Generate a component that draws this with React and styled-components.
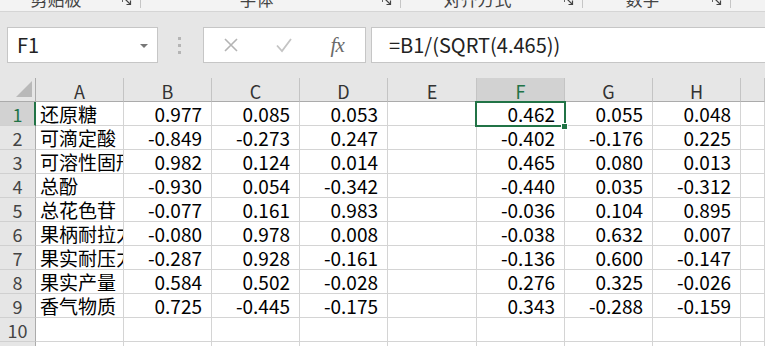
import styled, { createGlobalStyle } from "styled-components";

const GREEN = "#217346";
const FONT = `"Noto Sans CJK SC", "Noto Sans", sans-serif`;

const GlobalStyle = createGlobalStyle`
	html, body {
		margin: 0;
		padding: 0;
		background: #ffffff;
		overflow: hidden;
	}
	body {
		font-family: ${FONT};
	}
`;

const Page = styled.div`
	width: 765px;
	height: 346px;
	overflow: hidden;
	background: #ffffff;
`;

const Ribbon = styled.div`
	display: flex;
	height: 11px;
	background: #f3f3f3;
	border-bottom: 1px solid #d5d5d5;
	overflow: hidden;
`;

const Group = styled.div`
	display: flex;
	align-items: flex-start;
	width: ${(p) => p.width}px;
	flex-shrink: 0;
`;

const GroupLabel = styled.div`
	flex: 1;
	text-align: center;
	padding-right: 10px;
	font-size: 17px;
	line-height: 17px;
	margin-top: -10px;
	color: #444444;
	white-space: nowrap;
`;

const Launcher = styled.svg`
	width: 10px;
	height: 10px;
	margin-top: -4px;
	margin-right: 8px;
	flex-shrink: 0;
`;

const GroupDivider = styled.div`
	width: 1px;
	height: 8px;
	background: #c6c6c6;
	flex-shrink: 0;
`;

const FormulaBar = styled.div`
	display: flex;
	align-items: center;
	height: 66px;
	padding-left: 7px;
	background: #e6e6e6;
	box-sizing: border-box;
`;

const NameBox = styled.div`
	display: flex;
	align-items: center;
	justify-content: space-between;
	width: 151px;
	height: 36px;
	box-sizing: border-box;
	background: #ffffff;
	border: 1px solid #c6c6c6;
	padding: 0 9px;
	font-size: 20px;
	line-height: 24px;
	color: #222222;
`;

const Caret = styled.span`
	width: 0;
	height: 0;
	border-left: 4px solid transparent;
	border-right: 4px solid transparent;
	border-top: 4px solid #777777;
	margin-top: 2px;
`;

const Grip = styled.div`
	display: flex;
	flex-direction: column;
	gap: 4px;
	margin: 0 22px 0 20px;
	span {
		width: 3px;
		height: 3px;
		background: #b5b5b5;
	}
`;

const ActionBox = styled.div`
	display: grid;
	grid-template-columns: repeat(3, 1fr);
	align-items: center;
	justify-items: center;
	width: 163px;
	height: 36px;
	box-sizing: border-box;
	background: #ffffff;
	border: 1px solid #c6c6c6;
`;

const Fx = styled.span`
	font-family: "Liberation Serif", serif;
	font-style: italic;
	font-size: 21px;
	line-height: 24px;
	color: #6a6a6a;
	letter-spacing: -1px;
	padding-right: 2px;
`;

const FormulaInput = styled.div`
	flex: 1;
	height: 36px;
	margin-left: 5px;
	box-sizing: border-box;
	background: #ffffff;
	border: 1px solid #c6c6c6;
	border-right: none;
	display: flex;
	align-items: center;
	padding-left: 17px;
	font-size: 20px;
	line-height: 24px;
	color: #222222;
	white-space: nowrap;
`;

const Sheet = styled.div`
	position: relative;
	display: grid;
	grid-template-columns: 36px 88px 88px 88px 88px 89px 88px 88px 88px 1fr;
	grid-auto-rows: 24px;
	font-size: 19px;
`;

const Corner = styled.div`
	background: #e6e6e6;
	border-right: 1px solid #ababab;
	border-bottom: 1px solid #ababab;
	box-sizing: border-box;
	display: flex;
	align-items: flex-end;
	justify-content: flex-end;
	padding: 0 3px 4px 0;
	svg {
		display: block;
	}
`;

const ColHead = styled.div`
	box-sizing: border-box;
	background: ${(p) => (p.active ? "#d2d2d2" : "#e6e6e6")};
	color: ${(p) => (p.active ? GREEN : "#333333")};
	border-right: 1px solid #c4c4c4;
	border-bottom: 1px solid #ababab;
	display: flex;
	align-items: center;
	justify-content: center;
	font-size: 18px;
	line-height: 20px;
	padding-top: 2px;
	overflow: hidden;
`;

const RowHead = styled.div`
	box-sizing: border-box;
	background: ${(p) => (p.active ? "#d2d2d2" : "#e6e6e6")};
	color: ${(p) => (p.active ? GREEN : "#444444")};
	border-right: ${(p) => (p.active ? `2px solid ${GREEN}` : "1px solid #ababab")};
	border-bottom: 1px solid #d0d0d0;
	display: flex;
	align-items: center;
	justify-content: center;
	font-size: 18px;
	line-height: 20px;
	padding-left: ${(p) => (p.active ? "1px" : "0")};
	overflow: hidden;
`;

const Cell = styled.div`
	box-sizing: border-box;
	border-right: 1px solid #d4d4d4;
	border-bottom: 1px solid #d4d4d4;
	display: flex;
	align-items: center;
	justify-content: ${(p) => (p.text ? "flex-start" : "flex-end")};
	padding: ${(p) => (p.text ? "0 0 0 4px" : "0 9px 0 0")};
	overflow: hidden;
	white-space: nowrap;
	color: #000000;
	line-height: 22px;
`;

const Selection = styled.div`
	position: absolute;
	left: 475px;
	top: 23px;
	width: 91px;
	height: 26px;
	box-sizing: border-box;
	border: 2px solid ${GREEN};
	pointer-events: none;
`;

const FillHandle = styled.div`
	position: absolute;
	left: 561px;
	top: 45px;
	width: 7px;
	height: 7px;
	box-sizing: border-box;
	background: ${GREEN};
	border: 1px solid #ffffff;
`;

const groups = [
	{ label: "剪贴板", width: 141 },
	{ label: "字体", width: 260 },
	{ label: "对齐方式", width: 182 },
	{ label: "数字", width: 148 },
];

const columns = ["A", "B", "C", "D", "E", "F", "G", "H", ""];

const data = [
	["还原糖", "0.977", "0.085", "0.053", "", "0.462", "0.055", "0.048"],
	["可滴定酸", "-0.849", "-0.273", "0.247", "", "-0.402", "-0.176", "0.225"],
	["可溶性固形物", "0.982", "0.124", "0.014", "", "0.465", "0.080", "0.013"],
	["总酚", "-0.930", "0.054", "-0.342", "", "-0.440", "0.035", "-0.312"],
	["总花色苷", "-0.077", "0.161", "0.983", "", "-0.036", "0.104", "0.895"],
	["果柄耐拉力", "-0.080", "0.978", "0.008", "", "-0.038", "0.632", "0.007"],
	["果实耐压力", "-0.287", "0.928", "-0.161", "", "-0.136", "0.600", "-0.147"],
	["果实产量", "0.584", "0.502", "-0.028", "", "0.276", "0.325", "-0.026"],
	["香气物质", "0.725", "-0.445", "-0.175", "", "0.343", "-0.288", "-0.159"],
	["", "", "", "", "", "", "", ""],
	["", "", "", "", "", "", "", ""],
];

const LauncherIcon = () => (
	<Launcher viewBox="0 0 10 10">
		<path d="M0.5 6V0.5H6" fill="none" stroke="#666" strokeWidth="1" />
		<path d="M3 3L8.5 8.5M8.5 4.5V8.5H4.5" fill="none" stroke="#444" strokeWidth="1.2" />
	</Launcher>
);

const Row = ({ index, row }) => (
	<>
		<RowHead active={index === 0}>{index + 1}</RowHead>
		{row.map((v, i) => (
			<Cell key={i} text={i === 0}>
				{v}
			</Cell>
		))}
		<Cell />
	</>
);

const App = () => {
	return (
		<Page>
			<GlobalStyle />
			<Ribbon>
				{groups.map((g) => (
					<Group key={g.label} width={g.width}>
						<GroupLabel>{g.label}</GroupLabel>
						<LauncherIcon />
						<GroupDivider />
					</Group>
				))}
			</Ribbon>
			<FormulaBar>
				<NameBox>
					F1
					<Caret />
				</NameBox>
				<Grip>
					<span />
					<span />
					<span />
				</Grip>
				<ActionBox>
					<svg width="16" height="16" viewBox="0 0 16 16">
						<path d="M2 2L14 14M14 2L2 14" stroke="#b4b4b4" strokeWidth="1.6" />
					</svg>
					<svg width="18" height="16" viewBox="0 0 18 16">
						<path d="M2 8.5L7 14L16 2" fill="none" stroke="#c4c4c4" strokeWidth="1.8" />
					</svg>
					<Fx>fx</Fx>
				</ActionBox>
				<FormulaInput>=B1/(SQRT(4.465))</FormulaInput>
			</FormulaBar>
			<Sheet>
				<Corner>
					<svg width="16" height="16" viewBox="0 0 16 16">
						<path d="M16 0V16H0Z" fill="#b9b9b9" />
					</svg>
				</Corner>
				{columns.map((c, i) => (
					<ColHead key={i} active={c === "F"}>
						{c}
					</ColHead>
				))}
				{data.map((row, r) => (
					<Row key={r} index={r} row={row} />
				))}
				<Selection />
				<FillHandle />
			</Sheet>
		</Page>
	);
};

export default App;
